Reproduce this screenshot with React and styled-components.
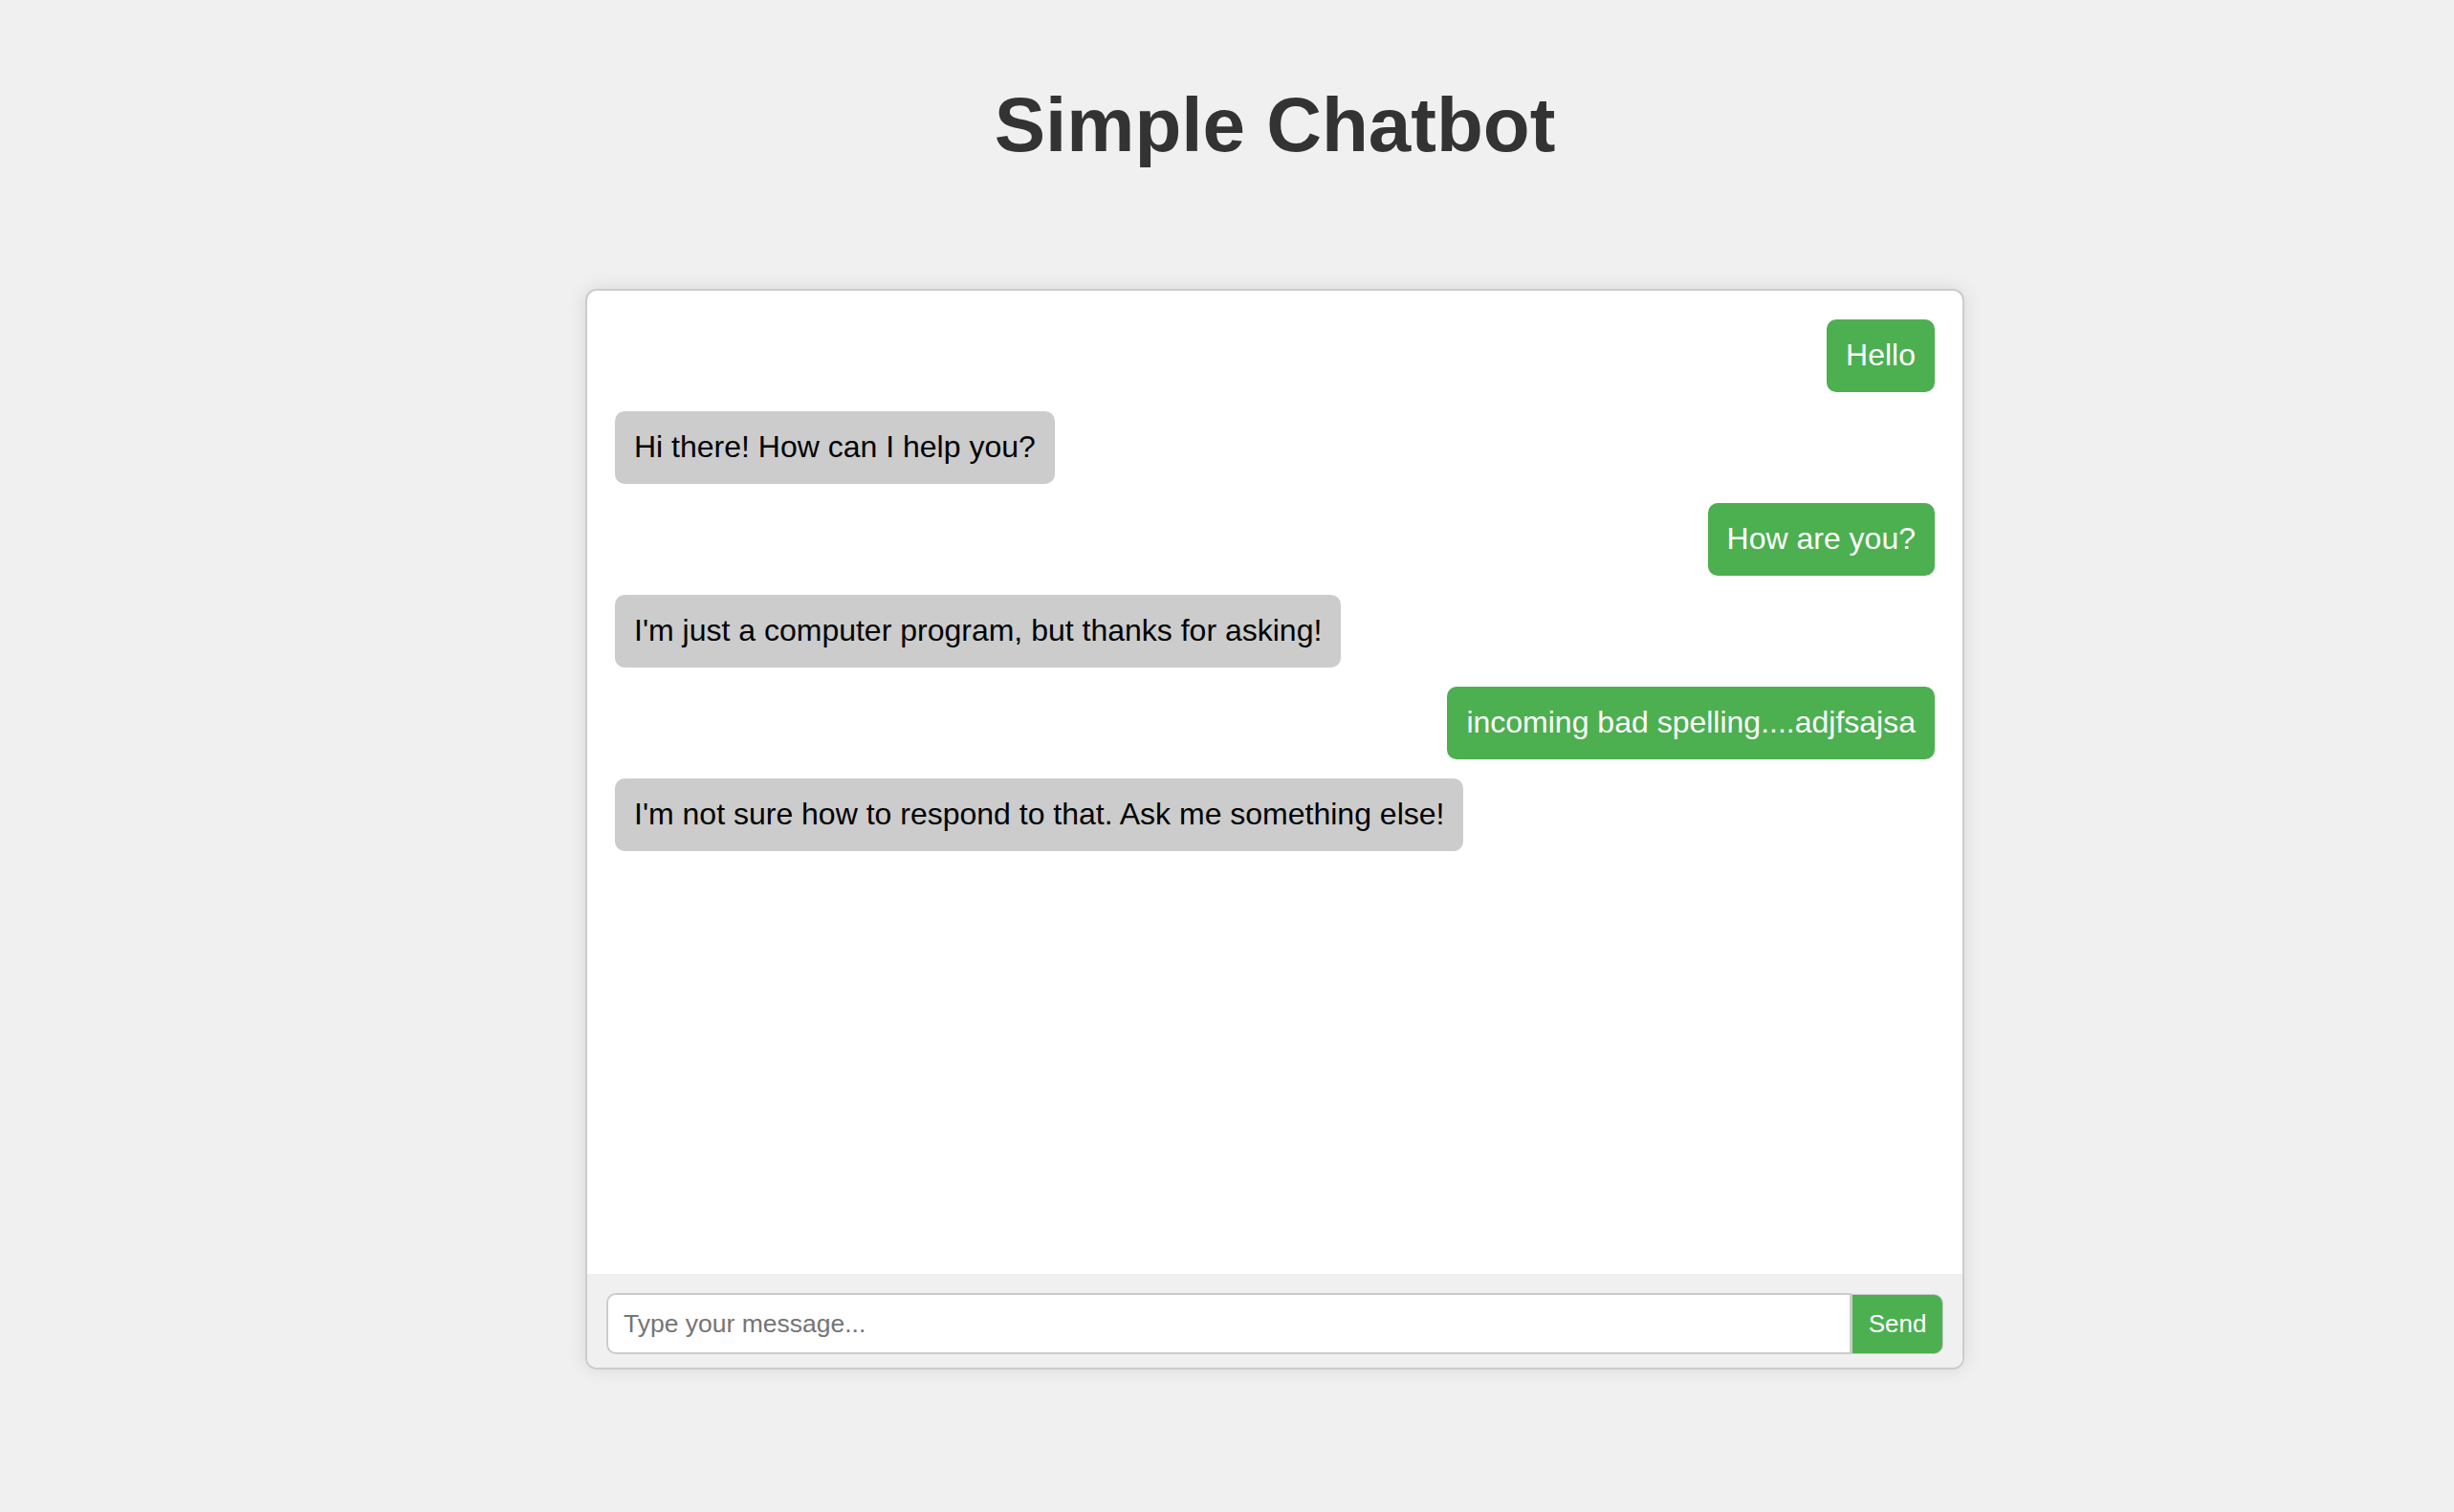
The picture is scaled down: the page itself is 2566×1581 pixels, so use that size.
import { useState } from 'react'
import styled, { createGlobalStyle } from 'styled-components'

const GlobalStyle = createGlobalStyle`
  body {
    margin: 0;
    background-color: #f0f0f0;
    font-family: "Liberation Sans", Arial, sans-serif;
  }
`

const Page = styled.div`
  display: flex;
  flex-direction: column;
  align-items: center;
  padding: 85px 0 120px 100px;
`

const Title = styled.h1`
  margin: 0 0 125px 0;
  font-size: 80px;
  line-height: 92px;
  font-weight: bold;
  color: #333;
  text-align: center;
`

const ChatBox = styled.div`
  width: 1442px;
  height: 1130px;
  box-sizing: border-box;
  display: flex;
  flex-direction: column;
  background-color: #fff;
  border: 2px solid #ccc;
  border-radius: 12px;
  box-shadow: 0 0 20px rgba(0, 0, 0, 0.1);
  overflow: hidden;
`

const Messages = styled.div`
  flex: 1;
  display: flex;
  flex-direction: column;
  gap: 20px;
  padding: 30px 29px;
  overflow-y: auto;
`

const Bubble = styled.div`
  padding: 19px 20px 21px 20px;
  border-radius: 10px;
  font-size: 32px;
  line-height: 36px;
  max-width: 70%;
  align-self: flex-start;
  background-color: #ccc;
  color: #000;
  ${(props) =>
    props.$user &&
    `
    align-self: flex-end;
    background-color: #4caf50;
    color: #fff;
  `}
`

const InputBar = styled.form`
  display: flex;
  align-items: center;
  padding: 20px 20px 14px 20px;
  background-color: #f0f0f0;
`

const TextInput = styled.input`
  flex: 1;
  height: 64px;
  box-sizing: border-box;
  padding: 0 16px;
  border: 2px solid #ccc;
  border-radius: 10px 0 0 10px;
  font-family: "Liberation Sans", Arial, sans-serif;
  font-size: 26.5px;
  color: #000;
  outline: none;
  &::placeholder {
    color: #757575;
  }
`

const SendButton = styled.button`
  height: 63px;
  width: 96px;
  box-sizing: border-box;
  border: 1px solid #ccc;
  border-radius: 0 10px 10px 0;
  background-color: #4caf50;
  color: #fff;
  font-family: "Liberation Sans", Arial, sans-serif;
  font-size: 26px;
  cursor: pointer;
  padding: 0;
`

const initialMessages = [
  { from: 'user', text: 'Hello' },
  { from: 'bot', text: 'Hi there! How can I help you?' },
  { from: 'user', text: 'How are you?' },
  { from: 'bot', text: "I'm just a computer program, but thanks for asking!" },
  { from: 'user', text: 'incoming bad spelling....adjfsajsa' },
  { from: 'bot', text: "I'm not sure how to respond to that. Ask me something else!" },
]

export default function App() {
  const [messages, setMessages] = useState(initialMessages)
  const [draft, setDraft] = useState('')

  const handleSubmit = (e) => {
    e.preventDefault()
    if (!draft.trim()) return
    setMessages([
      ...messages,
      { from: 'user', text: draft },
      { from: 'bot', text: "I'm not sure how to respond to that. Ask me something else!" },
    ])
    setDraft('')
  }

  return (
    <>
      <GlobalStyle />
      <Page>
        <Title>Simple Chatbot</Title>
        <ChatBox>
          <Messages>
            {messages.map((m, i) => (
              <Bubble key={i} $user={m.from === 'user'}>
                {m.text}
              </Bubble>
            ))}
          </Messages>
          <InputBar onSubmit={handleSubmit}>
            <TextInput
              type="text"
              placeholder="Type your message..."
              value={draft}
              onChange={(e) => setDraft(e.target.value)}
            />
            <SendButton type="submit">Send</SendButton>
          </InputBar>
        </ChatBox>
      </Page>
    </>
  )
}
